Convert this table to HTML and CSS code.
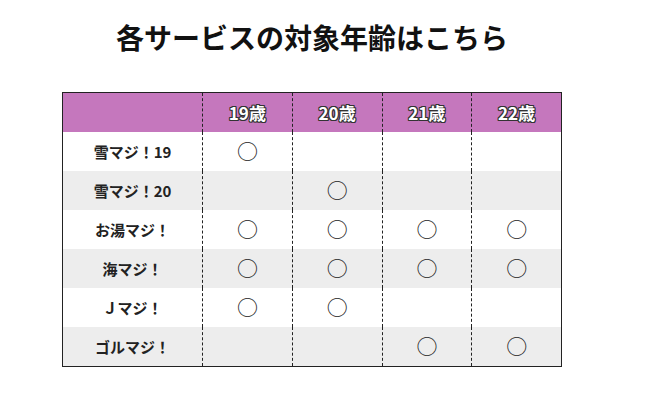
FILE: index.html
```html
<!DOCTYPE html>
<html lang="ja">
<head>
<meta charset="utf-8">
<link rel="stylesheet" href="styles.css">
</head>
<body>
<div class="wrap">
  <h1 class="title">各サービスの対象年齢はこちら</h1>
  <table class="ages">
    <thead>
      <tr><th class="name"></th><th>19歳</th><th>20歳</th><th>21歳</th><th>22歳</th></tr>
    </thead>
    <tbody>
      <tr><td class="name">雪マジ！19</td><td><span class="ok">○</span></td><td></td><td></td><td></td></tr>
      <tr><td class="name">雪マジ！20</td><td></td><td><span class="ok">○</span></td><td></td><td></td></tr>
      <tr><td class="name">お湯マジ！</td><td><span class="ok">○</span></td><td><span class="ok">○</span></td><td><span class="ok">○</span></td><td><span class="ok">○</span></td></tr>
      <tr><td class="name">海マジ！</td><td><span class="ok">○</span></td><td><span class="ok">○</span></td><td><span class="ok">○</span></td><td><span class="ok">○</span></td></tr>
      <tr><td class="name">Ｊマジ！</td><td><span class="ok">○</span></td><td><span class="ok">○</span></td><td></td><td></td></tr>
      <tr><td class="name">ゴルマジ！</td><td></td><td></td><td><span class="ok">○</span></td><td><span class="ok">○</span></td></tr>
    </tbody>
  </table>
</div>
</body>
</html>
```
FILE: styles.css
```css
html, body {
  margin: 0;
  padding: 0;
  background: #ffffff;
}
body {
  font-family: "Noto Sans CJK JP", "Noto Sans", sans-serif;
  color: #222;
}
.wrap {
  width: 500px;
  margin-left: 62px;
  padding-top: 17px;
}
.title {
  margin: 0;
  text-align: center;
  font-size: 28px;
  font-weight: 700;
  line-height: 40px;
  color: #111;
}
.ages {
  margin-top: 35px;
  width: 500px;
  border-collapse: collapse;
  border: 1px solid #222;
  table-layout: fixed;
}
.ages th, .ages td {
  padding: 0;
  text-align: center;
  vertical-align: middle;
  border-left: 1px dashed #222;
}
.ages .name {
  width: 139px;
  border-left: none;
}
.ages thead th {
  height: 39px;
  background: #c577bd;
  color: #fff;
  font-size: 17px;
  font-weight: 700;
  text-shadow: -1px -1px 0 #333, 1px -1px 0 #333, -1px 1px 0 #333, 1px 1px 0 #333, 0 1px 0 #333, 0 -1px 0 #333, 1px 0 0 #333, -1px 0 0 #333;
}
.ages tbody td {
  height: 39px;
  font-size: 15px;
  font-weight: 700;
  color: #222;
}
.ages tbody tr:nth-child(even) td {
  background: #ededed;
}
.ok {
  font-weight: 400;
  font-size: 21px;
  line-height: 20px;
  color: #222;
}
```
